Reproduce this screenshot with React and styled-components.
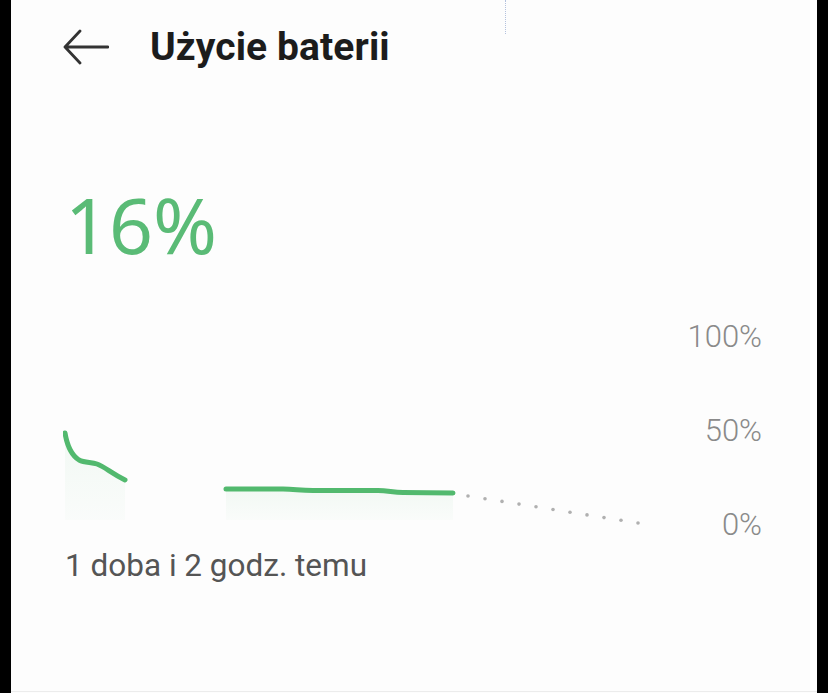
import React from 'react';
import styled, {createGlobalStyle} from 'styled-components';

const GlobalStyle = createGlobalStyle`
    html, body {
        margin: 0;
        padding: 0;
        background: #000;
    }
`;

const Frame = styled.div`
    position: relative;
    width: 806px;
    height: 693px;
    margin: 0 auto;
    background: #fdfdfd;
    display: flex;
    flex-direction: column;
    font-family: Roboto, "Noto Sans", sans-serif;
`;

const StrayMark = styled.span`
    position: absolute;
    left: 494px;
    top: 0;
    height: 34px;
    border-left: 1px dotted #b4c2de;
`;

const Header = styled.div`
    height: 94px;
    display: flex;
    align-items: center;
    padding-left: 52px;
    gap: 41px;
`;

const Title = styled.h1`
    margin: 0;
    font-size: 39px;
    font-weight: 700;
    color: #1c1c1c;
    letter-spacing: 0.1px;
`;

const Value = styled.div`
    margin-top: 91px;
    padding-left: 54px;
    font-family: "Noto Sans", sans-serif;
    font-size: 77px;
    line-height: 80px;
    font-weight: 400;
    color: #5abb76;
`;

const ChartRow = styled.div`
    margin-top: 58px;
    height: 216px;
    display: flex;
    padding: 0 55px 0 52px;
`;

const Axis = styled.div`
    margin-left: auto;
    display: flex;
    flex-direction: column;
    justify-content: space-between;
    align-items: flex-end;
`;

const AxisLabel = styled.span`
    font-size: 31px;
    line-height: 28px;
    font-weight: 300;
    color: #8a8a8a;
`;

const Caption = styled.div`
    margin-top: 9px;
    padding-left: 54px;
    font-size: 31.5px;
    line-height: 36px;
    color: #555;
`;

const Divider = styled.div`
    margin-top: auto;
    margin-bottom: 1px;
    height: 1px;
    background: #ececec;
`;

const BackArrow = () => (
    <svg width="46" height="36" viewBox="0 0 46 36" fill="none" stroke="#333" strokeWidth="2.8" strokeLinecap="round" strokeLinejoin="round">
        <path d="M45 18H2M17 2L2 18l15 16" />
    </svg>
);

const dots = Array.from({length: 11}, (_, i) => ({
    x: 405 + i * 17,
    y: 173 + i * 2.7,
}));

const Chart = () => (
    <svg width="600" height="216" viewBox="0 0 600 216">
        <defs>
            <linearGradient id="fade" x1="0" y1="0" x2="0" y2="1">
                <stop offset="0" stopColor="#5abb76" stopOpacity="0.07" />
                <stop offset="1" stopColor="#5abb76" stopOpacity="0.02" />
            </linearGradient>
        </defs>
        <path d="M2,110 C4,122 8,132 16,137 C22,140 28,139 34,141 C42,144 48,150 62,157 L62,197 L2,197 Z" fill="url(#fade)" />
        <path d="M163,166 L220,166 C232,166 236,167.5 250,167.5 L315,167.5 C325,167.5 330,169.5 340,169.5 L390,170 L390,197 L163,197 Z" fill="url(#fade)" />
        <g fill="none" stroke="#52b96e" strokeWidth="5" strokeLinecap="round" strokeLinejoin="round">
            <path d="M2,110 C4,122 8,132 16,137 C22,140 28,139 34,141 C42,144 48,150 62,157" />
            <path d="M163,166 L220,166 C232,166 236,167.5 250,167.5 L315,167.5 C325,167.5 330,169.5 340,169.5 L390,170" />
        </g>
        {dots.map((d, i) => (
            <circle key={i} cx={d.x} cy={d.y} r="1.8" fill="#b0b0b0" />
        ))}
    </svg>
);

const App = () => {
    return <>
        <GlobalStyle />
        <Frame>
            <StrayMark />
            <Header>
                <BackArrow />
                <Title>Użycie baterii</Title>
            </Header>
            <Value>16%</Value>
            <ChartRow>
                <Chart />
                <Axis>
                    <AxisLabel>100%</AxisLabel>
                    <AxisLabel>50%</AxisLabel>
                    <AxisLabel>0%</AxisLabel>
                </Axis>
            </ChartRow>
            <Caption>1 doba i 2 godz. temu</Caption>
            <Divider />
        </Frame>
    </>
};

export default App;
